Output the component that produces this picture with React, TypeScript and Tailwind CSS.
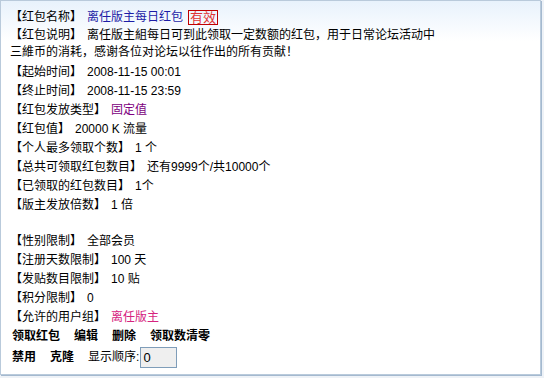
import React from 'react';

interface InfoRow {
  label: string;
  value: string;
  color?: string;
}

const timeRows: InfoRow[] = [
  { label: '【起始时间】', value: '2008-11-15 00:01' },
  { label: '【终止时间】', value: '2008-11-15 23:59' },
  { label: '【红包发放类型】', value: '固定值', color: 'text-[#800080]' },
  { label: '【红包值】', value: '20000 K 流量' },
  { label: '【个人最多领取个数】', value: '1 个' },
  { label: '【总共可领取红包数目】', value: '还有9999个/共10000个' },
  { label: '【已领取的红包数目】', value: '1个' },
  { label: '【版主发放倍数】', value: '1 倍' },
];

const limitRows: InfoRow[] = [
  { label: '【性别限制】', value: '全部会员' },
  { label: '【注册天数限制】', value: '100 天' },
  { label: '【发贴数目限制】', value: '10 贴' },
  { label: '【积分限制】', value: '0' },
  { label: '【允许的用户组】', value: '离任版主', color: 'text-[#d6237e]' },
];

const Row: React.FC<{ row: InfoRow }> = ({ row }) => (
  <div className="h-[19px] leading-[19px] whitespace-nowrap">
    <span>{row.label}</span>
    <span className={`ml-[5px] ${row.color ?? ''}`}>{row.value}</span>
  </div>
);

const App: React.FC = () => {
  return (
    <div className="w-[544px] h-[378px] bg-[#eef2f7] text-[12px] text-black font-['Liberation_Sans','Noto_Sans_CJK_SC',sans-serif]">
      <div className="w-[541px] h-[375px] border border-[#b9cadb] shadow-[1px_1px_0_#a4b9cf] bg-[linear-gradient(to_bottom,#e8f2fc_0px,#ffffff_40px)] pl-[9px] pt-[7px]">
        <div className="h-[19px] leading-[19px] flex items-center whitespace-nowrap">
          <span>【红包名称】</span>
          <span className="ml-[5px] text-[#1c1ca6]">离任版主每日红包</span>
          <span className="ml-[5px] w-[30px] h-[15px] flex items-center justify-center border border-[#c00000] text-[#e03434] text-[13px] leading-[13px]">
            有效
          </span>
        </div>
        <div className="leading-[17px] mb-[2px]">
          【红包说明】<span className="ml-[5px]">离任版主組每日可到此领取一定数额的红包，用于日常论坛活动中</span>
          <br />
          三維币的消耗，感谢各位对论坛以往作出的所有贡献！
        </div>
        {timeRows.map((row) => (
          <Row key={row.label} row={row} />
        ))}
        <div className="h-[17px]" />
        {limitRows.map((row) => (
          <Row key={row.label} row={row} />
        ))}
        <div className="h-[19px] leading-[19px] flex gap-[14px] font-bold pl-[2px]">
          <span>领取红包</span>
          <span>编辑</span>
          <span>删除</span>
          <span>领取数清零</span>
        </div>
        <div className="h-[22px] flex items-center gap-[14px] pl-[2px]">
          <span className="font-bold">禁用</span>
          <span className="font-bold">克隆</span>
          <span className="flex items-center">
            显示顺序:
            <input
              defaultValue="0"
              className="ml-[1px] w-[37px] h-[21px] border border-[#7f9db9] bg-[#efefef] pl-[2px] text-[13px] outline-none"
            />
          </span>
        </div>
      </div>
    </div>
  );
};

export default App;
